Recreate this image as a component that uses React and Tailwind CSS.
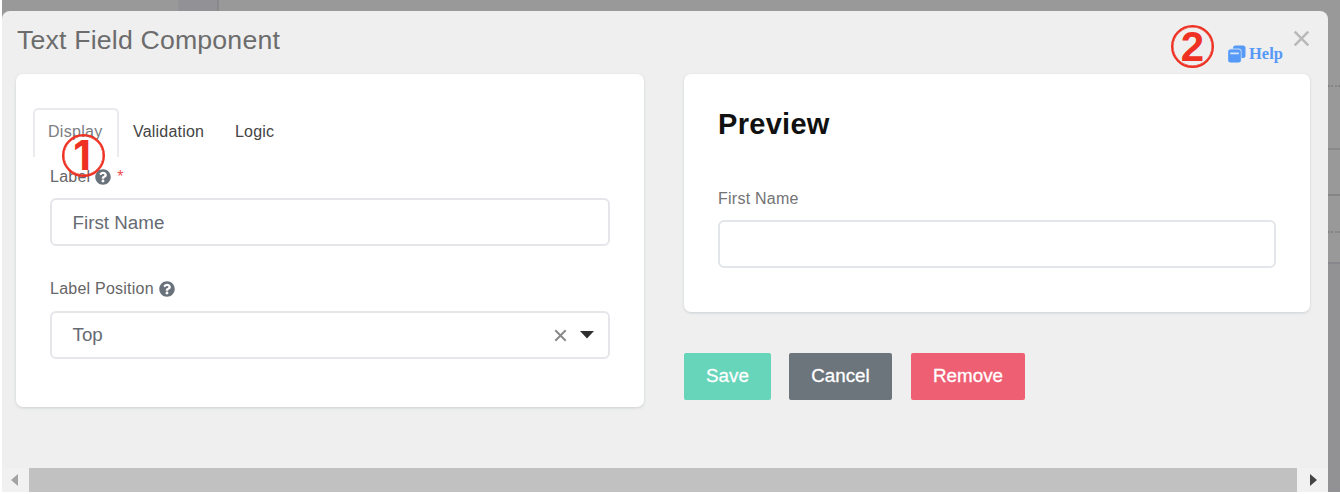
import React from "react";
import { FaQuestionCircle } from "react-icons/fa";

function Marker({ children, className }) {
  return (
    <div
      className={`absolute flex h-[43px] w-[43px] items-center justify-center rounded-full border-2 border-[#ee3123] leading-none font-bold text-[#ee3123] shadow-[inset_0_0_0_0.5px_#ee3123] ${className}`}
    >
      {children}
    </div>
  );
}

function FieldLabel({ children, required }) {
  return (
    <div className="flex h-5 items-center text-[16px] tracking-[0.24px] text-[#666]">
      <span>{children}</span>
      <FaQuestionCircle className="ml-[5px] h-4 w-4 text-[#69727b]" />
      {required && <span className="ml-[6px] text-[#f04b4b]">*</span>}
    </div>
  );
}

function Cross({ className }) {
  return (
    <svg viewBox="0 0 10 10" className={className} fill="none" stroke="currentColor">
      <path d="M1 1 9 9M9 1 1 9" strokeWidth="1.5" />
    </svg>
  );
}

function HelpLink() {
  return (
    <a className="absolute top-[43px] left-[1228px] flex items-center font-['Liberation_Serif',serif] text-[16.5px] leading-[22px] font-bold text-[#5799f7]">
      <svg viewBox="0 0 18 18" className="mr-[3px] h-[18px] w-[18px]">
        <rect x="5" y="0.5" width="12.5" height="12.5" rx="2.5" fill="#5799f7" />
        <rect x="0" y="3.6" width="13.6" height="14" rx="3" fill="#c5dbfa" />
        <rect x="0.2" y="4.6" width="12.6" height="12.9" rx="2.5" fill="#5799f7" />
        <path d="M2.2 8.4h8.6" stroke="#d5e5fb" strokeWidth="1.8" />
      </svg>
      Help
    </a>
  );
}

export default function App() {
  return (
    <div className="relative h-[494px] w-[1340px] overflow-hidden bg-white pl-[2px] font-['Liberation_Sans',sans-serif]">
      <div className="flex h-[492px] flex-col bg-[#999]">
        <div className="flex h-[11px] shrink-0">
          <div className="w-[176px]" />
          <div className="w-[41px] border-r-2 border-[#88898d] bg-[#929296]" />
        </div>
        <div className="flex min-h-0 flex-1">
          <main className="flex w-[1326px] flex-col rounded-t-[8px] bg-[#efefef]">
            <header className="flex h-[63px] items-start justify-between pt-[13px] pr-[18px] pl-[15px]">
              <h1 className="text-[26.7px] leading-8 tracking-[0.17px] text-[#6c6c6c]">Text Field Component</h1>
              <Cross className="mt-[6px] h-[17px] w-[17px] text-[#b9b9b9]" />
            </header>
            <div className="flex flex-1 items-start gap-10 pl-[14px]">
              <section className="h-[333px] w-[628px] rounded-[7px] bg-white px-[17px] pt-[34px] shadow-[0_1px_3px_#ccd0d4]">
                <nav className="flex h-[49px] text-[16px] tracking-[0.2px] text-[#444]">
                  <div className="w-[86px] rounded-t-[5px] border-2 border-b-0 border-[#e9eaee] pt-[12px] pl-[13px] leading-5 tracking-[0.3px] text-[#7a7d82]">
                    Display
                  </div>
                  <div className="ml-[14px] w-[102px] pt-[14px] leading-5">Validation</div>
                  <div className="pt-[14px] leading-5">Logic</div>
                </nav>
                <div className="pt-[10px] pr-[17px] pl-[17px]">
                  <FieldLabel required>Label</FieldLabel>
                  <div className="mt-[11px] flex h-[48px] items-center rounded-[6px] border-2 border-[#e4e6ea] pt-[2px] pl-[20.5px] text-[18.8px] text-[#666b72]">
                    First Name
                  </div>
                  <div className="mt-[33px]">
                    <FieldLabel>Label Position</FieldLabel>
                  </div>
                  <div className="mt-[12px] flex h-[48px] items-center rounded-[6px] border-2 border-[#e4e6ea] pr-[14px] pl-[20.5px] text-[18.8px] text-[#666b72]">
                    <span className="flex-1">Top</span>
                    <Cross className="h-[13px] w-[13px] text-[#888]" />
                    <svg viewBox="0 0 14 8" className="ml-[13px] h-[8px] w-[14px] fill-[#303030]">
                      <path d="M0 0h14L7 7.5z" />
                    </svg>
                  </div>
                </div>
              </section>
              <div className="w-[626px]">
                <section className="h-[238px] rounded-[7px] bg-white px-[34px] pt-[32px] shadow-[0_1px_3px_#ccd0d4]">
                  <h2 className="text-[29px] leading-9 font-bold tracking-[0.3px] text-[#111]">Preview</h2>
                  <div className="mt-[47px] text-[16px] leading-5 tracking-[0.25px] text-[#737373]">First Name</div>
                  <div className="mt-[11px] h-[48px] rounded-[6px] border-2 border-[#e2e6ea]" />
                </section>
                <div className="mt-[41px] flex text-[18.8px] text-white [-webkit-text-stroke:0.3px]">
                  <button className="h-[47px] w-[87px] rounded-[2px] bg-[#67d5b9]">Save</button>
                  <button className="ml-[18px] h-[47px] w-[103px] rounded-[2px] bg-[#6c747c]">Cancel</button>
                  <button className="ml-[19px] h-[47px] w-[114px] rounded-[2px] bg-[#ef5f74]">Remove</button>
                </div>
              </div>
            </div>
            <div className="flex h-[24px] items-stretch bg-[#f1f1f1]">
              <div className="flex w-[27px] items-center pl-[9px]">
                <svg viewBox="0 0 7 12" className="h-[12px] w-[7px] fill-[#a3a3a3]">
                  <path d="M7 0v12L0 6z" />
                </svg>
              </div>
              <div className="w-[1268px] bg-[#c1c1c1]" />
              <div className="flex flex-1 items-center pl-[13px]">
                <svg viewBox="0 0 7 12" className="h-[12px] w-[7px] fill-[#444]">
                  <path d="M0 0v12L7 6z" />
                </svg>
              </div>
            </div>
          </main>
          <aside className="flex flex-1 flex-col">
            <div className="h-[76px] border-b-2 border-dotted border-[#848484]" />
            <div className="h-[63px] border-b-2 border-[#89898c]" />
            <div className="h-[46px] border-b-2 border-[#858588]" />
            <div className="h-[37px] border-b-2 border-dotted border-[#848484]" />
            <div className="h-[31px] border-b-2 border-[#87888e]" />
            <div className="flex-1 bg-[#929295]" />
          </aside>
        </div>
      </div>
      <HelpLink />
      <Marker className="top-[134px] left-[62px] pr-[3px] font-['Inter',sans-serif] text-[41px]">1</Marker>
      <Marker className="top-[25px] left-[1171px] text-[42px]">2</Marker>
    </div>
  );
}
